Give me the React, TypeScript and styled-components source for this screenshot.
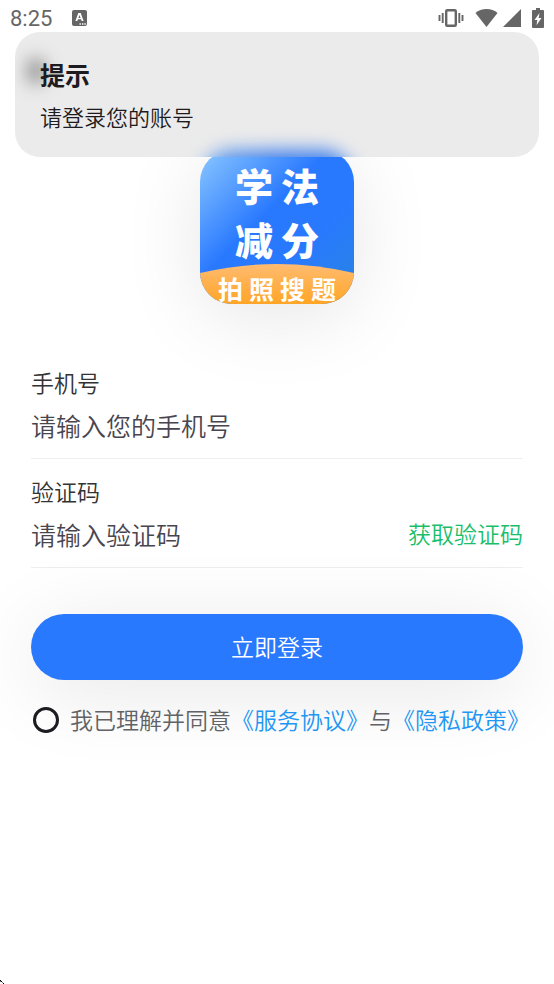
import React, { useState } from "react";
import styled, { createGlobalStyle } from "styled-components";

const GlobalStyle = createGlobalStyle`
  * { box-sizing: border-box; }
  body {
    margin: 0;
    background: #fff;
    font-family: Roboto, "Noto Sans CJK SC", sans-serif;
  }
  button, input { font-family: inherit; }
`;

const Page = styled.div`
  position: relative;
  display: flex;
  flex-direction: column;
  min-height: 100vh;
  overflow: hidden;
  font-weight: 350;
`;

const StatusBar = styled.header`
  display: flex;
  align-items: center;
  justify-content: space-between;
  height: 32px;
  padding: 4px 10px 0 10px;
  color: #666;
`;

const StatusGroup = styled.div<{ $gap: number }>`
  display: flex;
  align-items: center;
  gap: ${(p) => p.$gap}px;
`;

const Clock = styled.time`
  padding-top: 2px;
  font-size: 22px;
  font-weight: 400;
  line-height: 26px;
`;

const AppBar = styled.nav`
  display: flex;
  align-items: center;
  height: 76px;
  padding: 0 12px;
`;

const BackButton = styled.button`
  display: flex;
  align-items: center;
  justify-content: center;
  width: 48px;
  height: 48px;
  padding: 0;
  border: 0;
  background: none;
  color: #1d1b20;
`;

const LogoCard = styled.div`
  align-self: center;
  display: flex;
  margin: 42px 0 46px;
  border-radius: 32px;
  box-shadow: 0 12px 80px rgba(0, 0, 0, 0.1);
  svg { overflow: visible; }
`;

const Form = styled.form`
  display: flex;
  flex-direction: column;
  padding: 0 31px;
`;

const Field = styled.div`
  display: flex;
  flex-direction: column;
  padding: 19px 0 4px;
  border-bottom: 1px solid #eee;
`;

const Label = styled.label`
  color: #333;
  font-size: 23px;
  line-height: 32px;
`;

const InputRow = styled.div`
  display: flex;
  align-items: center;
  height: 53px;
`;

const Input = styled.input`
  flex: 1;
  min-width: 0;
  height: 53px;
  padding: 0;
  border: 0;
  outline: none;
  background: none;
  color: #1d1b20;
  font-size: 25px;
  font-weight: inherit;
  &::placeholder {
    color: #49454f;
    opacity: 1;
  }
`;

const CodeButton = styled.button`
  padding: 0 0 2px;
  border: 0;
  background: none;
  color: #19be6b;
  font-size: 23px;
  font-weight: inherit;
  line-height: 32px;
`;

const LoginButton = styled.button`
  height: 66px;
  margin-top: 46px;
  padding: 0 0 2px;
  border: 0;
  border-radius: 33px;
  background: #2979ff;
  box-shadow: 0 12px 80px rgba(0, 0, 0, 0.1);
  color: #fff;
  font-size: 23px;
  font-weight: inherit;
`;

const Agreement = styled.div`
  display: flex;
  align-items: center;
  gap: 11px;
  margin: 25px -16px 0 2px;
  color: #606266;
  font-size: 23px;
  line-height: 34px;
  white-space: nowrap;
`;

const Checkbox = styled.input`
  appearance: none;
  flex: none;
  width: 26px;
  height: 26px;
  margin: 0 0 4px;
  border: 3px solid #1d1b20;
  border-radius: 50%;
  &:checked {
    border-color: #2979ff;
    background: #2979ff;
  }
`;

const PolicyLink = styled.a`
  color: #2196f3;
  text-decoration: none;
`;

const Toast = styled.div`
  position: absolute;
  z-index: 1;
  top: 32px;
  left: 15px;
  right: 15px;
  padding: 28px 25px 23px;
  border-radius: 25px;
  overflow: hidden;
  background: #ebebeb;
  color: #1d1b20;
`;

/* Frosted tints of the logo and the back arrow that lie under the toast. */
const LogoTint = styled.div`
  position: absolute;
  z-index: -1;
  top: 100%;
  left: calc(50% - 77px);
  width: 154px;
  height: 60px;
  margin-top: -7px;
  border-radius: 32px 32px 0 0;
  background: linear-gradient(90deg, #6fa6ec, #407fec 50%, #4081ea);
  filter: blur(9px);
`;

const ArrowTint = styled.div`
  position: absolute;
  z-index: -1;
  top: 28px;
  left: 14px;
  width: 14px;
  height: 22px;
  background: rgba(40, 40, 40, 0.6);
  filter: blur(9px);
`;

const ToastTitle = styled.h2`
  margin: 0 0 9px;
  font-size: 25px;
  line-height: 34px;
  font-weight: 700;
`;

const ToastText = styled.p`
  margin: 0;
  font-size: 22px;
  line-height: 31px;
`;

const Corner = styled.svg`
  position: absolute;
  left: 0;
  bottom: 0;
`;

function KeyboardIcon() {
  return (
    <svg width="15" height="16" viewBox="0 0 15 16" aria-hidden="true">
      <rect width="15" height="16" rx="2" fill="#666" />
      <path
        d="M3.4 11 6.3 3h2.4l2.9 8H9.700l-.6-1.700H5.900L5.300 11ZM6.400 7.900h2.200L7.500 4.900Z"
        fill="#fff"
      />
      <path d="M7.500 13.300h1.400v1.400H7.500zM10 13.300h1.400v1.400H10zM12.400 13.300h1.400v1.400h-1.400z" fill="#fff" />
    </svg>
  );
}

function VibrateIcon() {
  return (
    <svg width="26" height="20" viewBox="0 0 26 20" aria-hidden="true">
      <rect x="8.200" y="2.200" width="9.600" height="15.600" rx="1" fill="none" stroke="#666" strokeWidth="2.400" />
      <path d="M1.500 7v6M4.700 5v10M21.300 5v10M24.500 7v6" stroke="#666" strokeWidth="1.900" />
    </svg>
  );
}

function WifiIcon() {
  return (
    <svg width="23" height="20" viewBox="0 0 24 20" preserveAspectRatio="none" aria-hidden="true">
      <path d="M12 19 .5 5C3.500 2.400 7.500 1 12 1s8.500 1.400 11.500 4Z" fill="#666" />
    </svg>
  );
}

function SignalIcon() {
  return (
    <svg width="18" height="18" viewBox="0 0 18 18" aria-hidden="true">
      <path d="M18 0v18H0Z" fill="#666" />
    </svg>
  );
}

function BatteryIcon() {
  return (
    <svg width="12" height="20" viewBox="0 0 12 20" aria-hidden="true">
      <path d="M4 0h4v2h3a1 1 0 0 1 1 1v16a1 1 0 0 1-1 1H1a1 1 0 0 1-1-1V3a1 1 0 0 1 1-1h3Z" fill="#666" />
      <path d="M7.500 5 2.500 12h2.800L4.500 17.200l5-7.200H6.700Z" fill="#fff" />
    </svg>
  );
}

function Logo() {
  return (
    <svg width="154" height="154" viewBox="0 0 154 154" role="img" aria-label="学法减分 拍照搜题">
      <defs>
        <linearGradient id="sky" x1="0" y1="0" x2="1" y2="1">
          <stop offset="0" stopColor="#8cc8ff" />
          <stop offset="0.420" stopColor="#2979ff" />
          <stop offset="0.650" stopColor="#2979ff" />
          <stop offset="1" stopColor="#2785e0" />
        </linearGradient>
        <linearGradient id="sun" x1="0" y1="0" x2="0" y2="1">
          <stop offset="0" stopColor="#ffbb70" />
          <stop offset="1" stopColor="#ffa526" />
        </linearGradient>
        <clipPath id="tile">
          <rect width="154" height="154" rx="32" />
        </clipPath>
      </defs>
      <g clipPath="url(#tile)">
        <rect width="154" height="154" fill="url(#sky)" />
        <path d="M0 123Q77 105 154 123V154H0Z" fill="url(#sun)" />
      </g>
      <g fill="#fff" fontFamily="'Noto Sans CJK SC', sans-serif" fontWeight="900">
        <g fontSize="38">
          <text x="35 81" y="51">学法</text>
          <text x="35 81" y="105">减分</text>
        </g>
        <text x="18 49 80 111" y="149" fontSize="25" fontWeight="700">拍照搜题</text>
      </g>
    </svg>
  );
}

export default function App() {
  const [agreed, setAgreed] = useState(false);
  return (
    <Page>
      <GlobalStyle />
      <StatusBar>
        <StatusGroup $gap={20}>
          <Clock>8:25</Clock>
          <KeyboardIcon />
        </StatusGroup>
        <StatusGroup $gap={11}>
          <VibrateIcon />
          <StatusGroup $gap={5}>
            <WifiIcon />
            <SignalIcon />
          </StatusGroup>
          <BatteryIcon />
        </StatusGroup>
      </StatusBar>
      <AppBar>
        <BackButton type="button" aria-label="返回">
          <svg width="14" height="24" viewBox="0 0 14 24" fill="none" aria-hidden="true">
            <path d="M12 2 2 12l10 10" stroke="currentColor" strokeWidth="3" />
          </svg>
        </BackButton>
      </AppBar>
      <LogoCard>
        <Logo />
      </LogoCard>
      <Form onSubmit={(e) => e.preventDefault()}>
        <Field>
          <Label htmlFor="phone">手机号</Label>
          <InputRow>
            <Input id="phone" type="tel" placeholder="请输入您的手机号" />
          </InputRow>
        </Field>
        <Field>
          <Label htmlFor="code">验证码</Label>
          <InputRow>
            <Input id="code" inputMode="numeric" placeholder="请输入验证码" />
            <CodeButton type="button">获取验证码</CodeButton>
          </InputRow>
        </Field>
        <LoginButton type="submit">立即登录</LoginButton>
        <Agreement>
          <Checkbox
            id="agree"
            type="checkbox"
            checked={agreed}
            onChange={(e) => setAgreed(e.target.checked)}
          />
          <span>
            <label htmlFor="agree">我已理解并同意</label>
            <PolicyLink href="#terms">《服务协议》</PolicyLink>与
            <PolicyLink href="#privacy">《隐私政策》</PolicyLink>
          </span>
        </Agreement>
      </Form>
      <Toast role="alert">
        <LogoTint />
        <ArrowTint />
        <ToastTitle>提示</ToastTitle>
        <ToastText>请登录您的账号</ToastText>
      </Toast>
      <Corner width="4" height="4" viewBox="0 0 4 4" aria-hidden="true">
        <path d="M0 0h1v1H0zM1 1h1v1H1zM3 3h1v1H3z" fill="#000" />
        <path d="M0 1h1v1H0zM2 2h1v1H2z" fill="#777" />
      </Corner>
    </Page>
  );
}
